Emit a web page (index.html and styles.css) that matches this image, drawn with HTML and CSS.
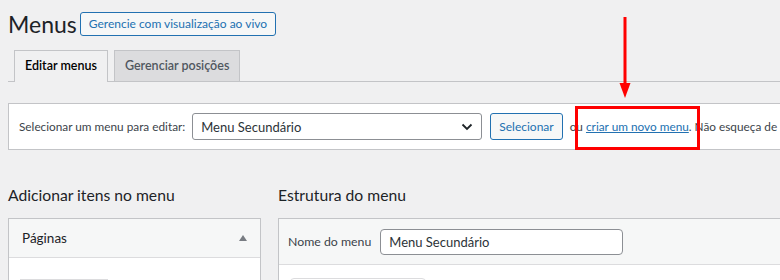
FILE: index.html
```html
<!DOCTYPE html>
<html lang="pt-BR">
<head>
    <meta charset="UTF-8">
    <title>Menus</title>
    <link rel="stylesheet" href="styles.css">
</head>
<body>

<div class="wrap">
    <div class="title-row">
        <h1>Menus</h1>
        <a class="btn-outline" href="#">Gerencie com visualização ao vivo</a>
    </div>

    <nav class="nav-tabs">
        <a class="nav-tab active" href="#">Editar menus</a>
        <a class="nav-tab" href="#">Gerenciar posições</a>
    </nav>

    <div class="manage-menus">
        <label for="select-menu">Selecionar um menu para editar:</label>
        <div class="select">
            <span>Menu Secundário</span>
            <svg class="chevron" width="12" height="8" viewBox="0 0 12 8"><path d="M1.5 1.5 L6 6 L10.5 1.5" fill="none" stroke="#1d2327" stroke-width="1.8"/></svg>
        </div>
        <button class="btn-secondary">Selecionar</button>
        <span class="hint">ou <a href="#">criar um novo menu</a>. Não esqueça de</span>
    </div>

    <div class="columns">
        <div class="col-left">
            <h2>Adicionar itens no menu</h2>
            <div class="box">
                <div class="box-head">
                    <span>Páginas</span>
                    <span class="caret"></span>
                </div>
                <div class="box-body">
                    <div class="tab-stub"></div>
                </div>
            </div>
        </div>
        <div class="col-right">
            <h2>Estrutura do menu</h2>
            <div class="box">
                <div class="box-head name-row">
                    <label>Nome do menu</label>
                    <div class="text-input">Menu Secundário</div>
                </div>
                <div class="box-body">
                    <div class="btn-stub"></div>
                </div>
            </div>
        </div>
    </div>
</div>

<!-- annotation overlay -->
<svg class="arrow" width="14" height="84" viewBox="0 0 14 84">
    <rect x="5.5" y="0" width="3" height="70" fill="#f00"/>
    <polygon points="1.5,66 12.5,66 7,81" fill="#f00"/>
</svg>
<div class="highlight"></div>

</body>
</html>
```

FILE: styles.css
```css
body {
    margin: 0;
    background-color: #f0f0f1;
    font-family: 'Lato', 'Liberation Sans', sans-serif;
    color: #1d2327;
    overflow: hidden;
}
.wrap {
    padding: 9px 0 0 8px;
    width: 1000px;
}
.title-row {
    display: flex;
    align-items: center;
    gap: 3px;
    height: 30px;
}
h1 {
    margin: 0;
    font-size: 23px;
    font-weight: 400;
    line-height: 30px;
}
.btn-outline {
    display: inline-block;
    padding: 0 8px;
    height: 22px;
    line-height: 22px;
    border: 1px solid #2271b1;
    border-radius: 3px;
    background: #f6f7f7;
    color: #2271b1;
    font-size: 12px;
    text-decoration: none;
}
.nav-tabs {
    display: flex;
    gap: 6px;
    margin-top: 11px;
    padding-left: 6px;
    border-bottom: 1px solid #c3c4c7;
    height: 31px;
}
.nav-tab {
    display: block;
    height: 30px;
    line-height: 30px;
    padding: 0 10px;
    border: 1px solid #c3c4c7;
    border-bottom: none;
    background: #dcdcde;
    color: #50575e;
    font-size: 12.5px;
    font-weight: 600;
    text-decoration: none;
}
.nav-tab.active {
    background: #f0f0f1;
    color: #000;
    height: 31px;
    margin-bottom: -1px;
}
.manage-menus {
    display: flex;
    align-items: center;
    margin-top: 21px;
    padding: 0 10px;
    height: 45px;
    background: #fff;
    border: 1px solid #c3c4c7;
    font-size: 11.8px;
    white-space: nowrap;
}
.manage-menus label {
    color: #3c434a;
}
.select {
    display: flex;
    align-items: center;
    justify-content: space-between;
    box-sizing: border-box;
    width: 290px;
    height: 27px;
    margin-left: 7px;
    padding: 0 8px;
    border: 1px solid #8c8f94;
    border-radius: 3px;
    font-size: 13px;
    color: #2c3338;
}
.btn-secondary {
    box-sizing: border-box;
    height: 27px;
    margin-left: 8px;
    padding: 0 8px;
    border: 1px solid #2271b1;
    border-radius: 3px;
    background: #f6f7f7;
    color: #2271b1;
    font-family: inherit;
    font-size: 12px;
}
.hint {
    margin-left: 7px;
    color: #3c434a;
}
.hint a {
    color: #2271b1;
}
.columns {
    display: flex;
    gap: 17px;
    margin-top: 34px;
}
h2 {
    margin: 0 0 12px 0;
    font-size: 15.7px;
    font-weight: 400;
    line-height: 22px;
}
.col-left {
    width: 253px;
}
.col-right {
    flex: 1;
}
.box {
    border: 1px solid #c3c4c7;
    background: #fff;
    height: 80px;
}
.box-head {
    display: flex;
    align-items: center;
    justify-content: space-between;
    height: 38px;
    padding: 0 12px 0 13px;
    background: #f6f7f7;
    border-bottom: 1px solid #dcdcde;
    font-size: 13.5px;
}
.caret {
    width: 0;
    height: 0;
    border-left: 4.5px solid transparent;
    border-right: 4.5px solid transparent;
    border-bottom: 6px solid #787c82;
    margin-right: 1px;
}
.name-row {
    justify-content: flex-start;
    gap: 9px;
    height: 45px;
    padding-left: 9px;
}
.name-row label {
    font-size: 12.3px;
    color: #3c434a;
}
.text-input {
    box-sizing: border-box;
    width: 243px;
    height: 26px;
    line-height: 24px;
    padding: 0 8px;
    border: 1px solid #8c8f94;
    border-radius: 4px;
    background: #fff;
    font-size: 13px;
    color: #2c3338;
}
.box-body {
    padding: 21px 11px 0 11px;
}
.tab-stub {
    width: 88px;
    height: 10px;
    border-top: 1px solid #dcdcde;
}
.btn-stub {
    width: 134px;
    height: 10px;
    margin-top: -8px;
    border: 1px solid #dcdcde;
    border-radius: 4px;
}
.arrow {
    position: absolute;
    left: 618px;
    top: 17px;
}
.highlight {
    position: absolute;
    left: 575px;
    top: 106px;
    width: 119px;
    height: 38px;
    border: 3px solid #f00;
}
```
